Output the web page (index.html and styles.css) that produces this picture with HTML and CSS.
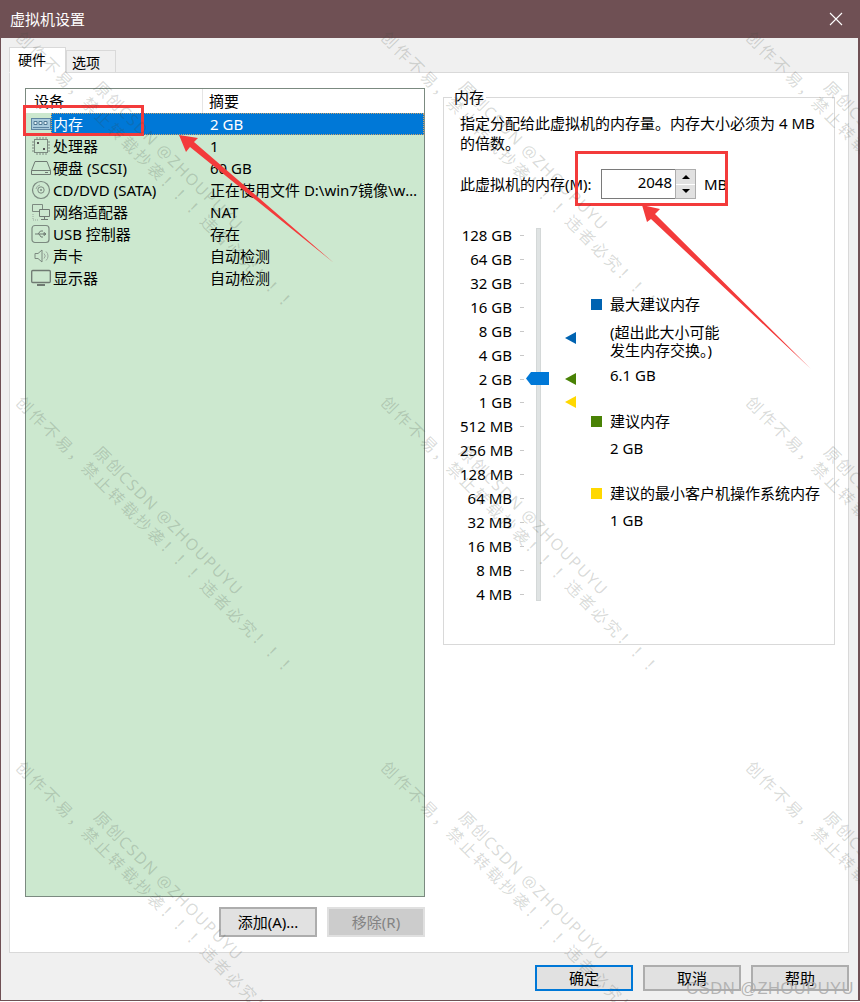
FILE: index.html
```html
<!DOCTYPE html>
<html lang="zh-CN">
<head>
    <meta charset="UTF-8">
    <title>虚拟机设置</title>
    <link rel="stylesheet" href="styles.css">
</head>
<body>
    <div class="window">
        <div class="titlebar">
            <span>虚拟机设置</span>
            <svg class="close" width="14" height="14" viewBox="0 0 14 14"><path d="M1 1L13 13M13 1L1 13" stroke="#fff" stroke-width="1.1" fill="none"/></svg>
        </div>

        <div class="content">
            <div class="tabs">
                <div class="tab active">硬件</div>
                <div class="tab">选项</div>
            </div>

            <div class="panel">
                <div class="left-column">
                    <div class="devices">
                        <div class="devices-head">
                            <div class="head-name">设备</div>
                            <div class="head-summary">摘要</div>
                        </div>

                        <div class="row selected">
                            <div class="row-icon">
                                <svg width="20" height="18" viewBox="0 0 20 18"><rect x="0.5" y="3.5" width="19" height="11" fill="#a9cbdc" stroke="#5f86a3"/><path d="M3 6.5h3v3H3zM8 6.5h3v3H8zM13 6.5h3v3h-3z" fill="#e8f3f8" stroke="#4f7893"/><path d="M2 12.5h16" stroke="#5f86a3"/></svg>
                            </div>
                            <div class="row-body">
                                <div class="row-name">内存</div>
                                <div class="row-summary">2 GB</div>
                            </div>
                        </div>
                        <div class="row">
                            <div class="row-icon">
                                <svg width="20" height="20" viewBox="0 0 20 20"><rect x="3.5" y="3.5" width="13" height="13" fill="none" stroke="#7c8a80"/><path d="M6 1v2M9 1v2M12 1v2M15 1v2M6 17v2M9 17v2M12 17v2M15 17v2M1 6h2M1 9h2M1 12h2M1 15h2M17 6h2M17 9h2M17 12h2M17 15h2" stroke="#7c8a80"/><path d="M6 6h2v2H6zM12 12h2v2h-2z" fill="#555"/></svg>
                            </div>
                            <div class="row-body">
                                <div class="row-name">处理器</div>
                                <div class="row-summary">1</div>
                            </div>
                        </div>
                        <div class="row">
                            <div class="row-icon">
                                <svg width="20" height="18" viewBox="0 0 20 18"><path d="M4 2.5h12l3.5 9v4H.5v-4zM.5 11.5h19" fill="none" stroke="#6f7a72"/><path d="M14 13.5h3" stroke="#6f7a72"/></svg>
                            </div>
                            <div class="row-body">
                                <div class="row-name">硬盘 (SCSI)</div>
                                <div class="row-summary">60 GB</div>
                            </div>
                        </div>
                        <div class="row">
                            <div class="row-icon">
                                <svg width="20" height="20" viewBox="0 0 20 20"><circle cx="10" cy="10" r="8.5" fill="none" stroke="#7c8a80" stroke-width="1.2"/><circle cx="10" cy="10" r="3.2" fill="none" stroke="#7c8a80"/><circle cx="10" cy="10" r="1" fill="#7c8a80"/><path d="M5 9a5 5 0 0 1 4-4" fill="none" stroke="#9aa89e"/></svg>
                            </div>
                            <div class="row-body">
                                <div class="row-name">CD/DVD (SATA)</div>
                                <div class="row-summary">正在使用文件 D:\win7镜像\win7_x64_professional.iso</div>
                            </div>
                        </div>
                        <div class="row">
                            <div class="row-icon">
                                <svg width="20" height="20" viewBox="0 0 20 20"><path d="M1.5 2.5h10v7h-10z" fill="none" stroke="#7c8a80"/><path d="M8.5 7.5h10v7h-10z" fill="#cce8cf" stroke="#6f7a72"/><path d="M13.5 14.5v3M10 17.5h7" stroke="#6f7a72"/><path d="M2 12v6h5" fill="none" stroke="#9aa89e" stroke-dasharray="1 1"/></svg>
                            </div>
                            <div class="row-body">
                                <div class="row-name">网络适配器</div>
                                <div class="row-summary">NAT</div>
                            </div>
                        </div>
                        <div class="row">
                            <div class="row-icon">
                                <svg width="20" height="20" viewBox="0 0 20 20"><rect x="1" y="1.5" width="17" height="17" rx="3" fill="none" stroke="#7c8a80" stroke-width="1.2"/><path d="M4 10h11M15 10l-2-1.5v3zM7 10l2.500-3h2.500M8 10l2 3h2" fill="none" stroke="#6f7a72"/></svg>
                            </div>
                            <div class="row-body">
                                <div class="row-name">USB 控制器</div>
                                <div class="row-summary">存在</div>
                            </div>
                        </div>
                        <div class="row">
                            <div class="row-icon">
                                <svg width="20" height="18" viewBox="0 0 20 18"><path d="M4 6.500h3l4-3.500v12l-4-3.500H4z" fill="none" stroke="#7c8a80"/><path d="M13 6.500a3.500 3.500 0 0 1 0 5M15 4.500a6 6 0 0 1 0 9" fill="none" stroke="#9aa89e"/></svg>
                            </div>
                            <div class="row-body">
                                <div class="row-name">声卡</div>
                                <div class="row-summary">自动检测</div>
                            </div>
                        </div>
                        <div class="row">
                            <div class="row-icon">
                                <svg width="20" height="18" viewBox="0 0 20 18"><rect x="0.700" y="1.500" width="18.600" height="12" rx="1" fill="none" stroke="#6f7a72" stroke-width="1.300"/><path d="M6 16h8" stroke="#6f7a72" stroke-width="2"/></svg>
                            </div>
                            <div class="row-body">
                                <div class="row-name">显示器</div>
                                <div class="row-summary">自动检测</div>
                            </div>
                        </div>
                    </div>

                    <div class="device-buttons">
                        <button class="btn">添加(A)...</button>
                        <button class="btn disabled">移除(R)</button>
                    </div>
                </div>

                <div class="groupbox">
                    <div class="legend-title">内存</div>
                    <p class="desc">指定分配给此虚拟机的内存量。内存大小必须为 4 MB<br>的倍数。</p>

                    <div class="memory-row">
                        <span class="memory-label">此虚拟机的内存(M):</span>
                        <div class="spinner">
                            <div class="spinner-value">2048</div>
                            <div class="spinner-buttons">
                                <div class="spin-btn"><i class="arrow-up"></i></div>
                                <div class="spin-btn"><i class="arrow-down"></i></div>
                            </div>
                        </div>
                        <span class="memory-unit">MB</span>
                    </div>

                    <div class="slider-area">
                        <div class="scale">
                            <div class="tick">128 GB</div>
                            <div class="tick">64 GB</div>
                            <div class="tick">32 GB</div>
                            <div class="tick">16 GB</div>
                            <div class="tick">8 GB</div>
                            <div class="tick">4 GB</div>
                            <div class="tick">2 GB</div>
                            <div class="tick">1 GB</div>
                            <div class="tick">512 MB</div>
                            <div class="tick">256 MB</div>
                            <div class="tick">128 MB</div>
                            <div class="tick">64 MB</div>
                            <div class="tick">32 MB</div>
                            <div class="tick">16 MB</div>
                            <div class="tick">8 MB</div>
                            <div class="tick">4 MB</div>
                        </div>
                        <div class="track">
                            <svg class="thumb" width="23" height="13" viewBox="0 0 23 13"><path d="M0 6.500L5 0h18v13H5z" fill="#0078d7"/></svg>
                        </div>
                        <div class="markers">
                            <i class="marker blue"></i>
                            <i class="marker green"></i>
                            <i class="marker yellow"></i>
                        </div>
                        <div class="legend">
                            <div class="legend-name"><i class="swatch blue"></i>最大建议内存</div>
                            <div class="legend-note">(超出此大小可能<br>发生内存交换。)</div>
                            <div class="legend-value first">6.1 GB</div>
                            <div class="legend-name second"><i class="swatch green"></i>建议内存</div>
                            <div class="legend-value">2 GB</div>
                            <div class="legend-name third"><i class="swatch yellow"></i>建议的最小客户机操作系统内存</div>
                            <div class="legend-value">1 GB</div>
                        </div>
                    </div>
                </div>
            </div>

            <div class="dialog-buttons">
                <button class="btn primary">确定</button>
                <button class="btn">取消</button>
                <button class="btn">帮助</button>
            </div>
        </div>
    </div>

    <!-- red marks someone drew on the screenshot -->
    <svg class="annotations" width="860" height="1002" viewBox="0 0 860 1002">
        <rect x="24.500" y="106.500" width="118" height="28" fill="none" stroke="#f33b3b" stroke-width="3"/>
        <rect x="576.500" y="152.500" width="150" height="52" fill="none" stroke="#f33b3b" stroke-width="3"/>
        <polygon points="179,135 198,138 194,142 334,263 190,147 186,152" fill="#f33b3b"/>
        <polygon points="642,205 660,209 655,214 811,369 651,219 647,222" fill="#f33b3b"/>
    </svg>

    <div class="watermark">
        <div class="wm-tile"><div class="wm-line">创作不易，禁止转载抄袭！！！违者必究！！！</div><div class="wm-line top">原创CSDN @ZHOUPUYU</div></div>
        <div class="wm-tile"><div class="wm-line">创作不易，禁止转载抄袭！！！违者必究！！！</div><div class="wm-line top">原创CSDN @ZHOUPUYU</div></div>
        <div class="wm-tile"><div class="wm-line">创作不易，禁止转载抄袭！！！违者必究！！！</div><div class="wm-line top">原创CSDN @ZHOUPUYU</div></div>
        <div class="wm-tile"><div class="wm-line">创作不易，禁止转载抄袭！！！违者必究！！！</div><div class="wm-line top">原创CSDN @ZHOUPUYU</div></div>
        <div class="wm-tile"><div class="wm-line">创作不易，禁止转载抄袭！！！违者必究！！！</div><div class="wm-line top">原创CSDN @ZHOUPUYU</div></div>
        <div class="wm-tile"><div class="wm-line">创作不易，禁止转载抄袭！！！违者必究！！！</div><div class="wm-line top">原创CSDN @ZHOUPUYU</div></div>
        <div class="wm-tile"><div class="wm-line">创作不易，禁止转载抄袭！！！违者必究！！！</div><div class="wm-line top">原创CSDN @ZHOUPUYU</div></div>
        <div class="wm-tile"><div class="wm-line">创作不易，禁止转载抄袭！！！违者必究！！！</div><div class="wm-line top">原创CSDN @ZHOUPUYU</div></div>
        <div class="wm-tile"><div class="wm-line">创作不易，禁止转载抄袭！！！违者必究！！！</div><div class="wm-line top">原创CSDN @ZHOUPUYU</div></div>
    </div>
    <div class="csdn-mark">CSDN @ZHOUPUYU</div>
</body>
</html>
```

FILE: styles.css
```css
* {
    box-sizing: border-box;
    margin: 0;
    padding: 0;
}

html, body {
    overflow: hidden;
}

body {
    position: relative;
    width: 860px;
    height: 1002px;
    background: #ffffff;
    color: #000000;
    font-family: "Noto Sans", "Noto Sans CJK SC", sans-serif;
    font-size: 15px;
    line-height: 19px;
}

.window {
    display: flex;
    flex-direction: column;
    width: 860px;
    height: 1001px;
    background: #f0f0f0;
    border: 1px solid #6f5054;
    border-top: 0;
    border-right-width: 2px;
}

.titlebar {
    display: flex;
    align-items: center;
    justify-content: space-between;
    height: 38px;
    flex-shrink: 0;
    padding: 0 15px 0 9px;
    background: #6f5054;
    color: #ffffff;
}

.content {
    display: flex;
    flex-direction: column;
    flex: 1;
    padding: 9px 9px 0 8px;
}

.tabs {
    display: flex;
    align-items: flex-end;
    height: 26px;
    margin-bottom: -1px;
    position: relative;
}

.tab {
    width: 50px;
    height: 23px;
    padding-left: 5px;
    border: 1px solid #d9d9d9;
    border-bottom: 0;
    font-size: 14px;
    line-height: 24px;
}

.tab.active {
    width: 57px;
    height: 26px;
    padding-left: 8px;
    background: #ffffff;
    border-bottom: 1px solid #ffffff;
}

.panel {
    display: flex;
    height: 881px;
    padding: 15px 12px 15px 15px;
    gap: 18px;
    background: #ffffff;
    border: 1px solid #d9d9d9;
}

.left-column {
    display: flex;
    flex-direction: column;
    width: 400px;
}

.devices {
    flex: 1;
    background: #cce8cf;
    border: 1px solid #7b8a80;
}

.devices-head {
    display: flex;
    height: 24px;
    background: #ffffff;
    line-height: 24px;
}

.head-name {
    width: 177px;
    padding-left: 8px;
    border-right: 1px solid #e5e5e5;
}

.head-summary {
    padding-left: 6px;
}

.row {
    display: flex;
    height: 22px;
    line-height: 22px;
}

.row-icon {
    display: flex;
    align-items: center;
    width: 25px;
    padding-left: 5px;
    flex-shrink: 0;
}

.row-body {
    display: flex;
    flex: 1;
    min-width: 0;
    padding-left: 2px;
}

.row-name {
    width: 157px;
    flex-shrink: 0;
}

.row-summary {
    flex: 1;
    min-width: 0;
    padding-right: 6px;
    overflow: hidden;
    white-space: nowrap;
    text-overflow: ellipsis;
}

.row.selected .row-body {
    background: #0078d7;
    color: #ffffff;
    outline: 1px dotted #cfa36a;
    outline-offset: -1px;
}

.device-buttons {
    display: flex;
    justify-content: flex-end;
    gap: 10px;
    padding-top: 10px;
}

.btn {
    width: 98px;
    height: 30px;
    background: #e1e1e1;
    border: 2px solid #adadad;
    color: #000000;
    font: inherit;
}

.btn.disabled {
    background: #cccccc;
    border-color: #e0e0e0;
    color: #838383;
}

.btn.primary {
    border-color: #0078d7;
}

.groupbox {
    position: relative;
    width: 392px;
    height: 548px;
    margin-top: 9px;
    padding: 15px 0 0 16px;
    border: 1px solid #d9d9d9;
}

.legend-title {
    position: absolute;
    top: -10px;
    left: 8px;
    padding: 0 2px;
    background: #ffffff;
}

.desc {
    line-height: 20px;
}

.memory-row {
    display: flex;
    align-items: center;
    margin-top: 16px;
    height: 30px;
}

.memory-label {
    width: 141px;
}

.spinner {
    display: flex;
    width: 95px;
    height: 30px;
    border: 1px solid #7a7a7a;
    border-right: 0;
}

.spinner-value {
    flex: 1;
    padding: 2px 3px 0 0;
    text-align: right;
    line-height: 20px;
    font-size: 15px;
}

.spinner-buttons {
    display: flex;
    flex-direction: column;
    width: 21px;
    margin: -1px 0;
    border: 1px solid #adadad;
    background: #ffffff;
    gap: 1px;
}

.spin-btn {
    display: flex;
    align-items: center;
    justify-content: center;
    flex: 1;
    background: #e1e1e1;
}

.arrow-up {
    border: 4px solid transparent;
    border-top: 0;
    border-bottom: 4px solid #000000;
}

.arrow-down {
    border: 4px solid transparent;
    border-bottom: 0;
    border-top: 4px solid #000000;
}

.memory-unit {
    margin-left: 8px;
}

.slider-area {
    display: flex;
    height: 373px;
    margin-top: 29px;
}

.scale {
    display: flex;
    flex-direction: column;
    justify-content: space-between;
    width: 64px;
}

.tick {
    position: relative;
    height: 14px;
    padding-right: 12px;
    margin-right: 0;
    text-align: right;
    line-height: 14px;
    white-space: nowrap;
}

.tick::after {
    content: "";
    position: absolute;
    right: 0;
    top: 7px;
    width: 4px;
    height: 1px;
    background: #c8c8c8;
}

.track {
    position: relative;
    width: 5px;
    margin-left: 12px;
    background: #dfe3e3;
    border: 1px solid #d4d8d8;
}

.thumb {
    position: absolute;
    left: -11px;
    top: 143px;
}

.markers {
    position: relative;
    width: 50px;
}

.marker {
    position: absolute;
    left: 24px;
    width: 0;
    height: 0;
    border-top: 6px solid transparent;
    border-bottom: 6px solid transparent;
    border-right: 11px solid #000000;
}

.marker.blue {
    top: 104px;
    border-right-color: #0063b1;
}

.marker.green {
    top: 145px;
    border-right-color: #498205;
}

.marker.yellow {
    top: 168px;
    border-right-color: #ffd800;
}

.legend {
    position: relative;
    padding: 67px 0 0 19px;
    margin-left: 0;
    white-space: nowrap;
}

.legend-name {
    position: relative;
}

.swatch {
    position: absolute;
    left: -19px;
    top: 4px;
    width: 11px;
    height: 11px;
}

.swatch.blue { background: #0063b1; }
.swatch.green { background: #498205; }
.swatch.yellow { background: #ffd800; }

.legend-note {
    margin-top: 9px;
    line-height: 18px;
}

.legend-value {
    margin-top: 8px;
}

.legend-value.first {
    margin-top: 7px;
}

.legend-name.second {
    margin-top: 27px;
}

.legend-name.third {
    margin-top: 26px;
}

.dialog-buttons {
    display: flex;
    justify-content: flex-end;
    gap: 10px;
    padding-top: 12px;
}

.dialog-buttons .btn {
    height: 26px;
    line-height: 20px;
    padding: 0;
}

.annotations {
    position: absolute;
    top: 0;
    left: 0;
    pointer-events: none;
}

.watermark {
    position: absolute;
    top: 0;
    left: 0;
    width: 860px;
    height: 1002px;
    overflow: hidden;
    display: grid;
    grid-template-columns: repeat(3, 365px);
    grid-auto-rows: 365px;
    padding: 30px 0 0 15px;
    pointer-events: none;
}

.wm-tile {
    position: relative;
}

.wm-line {
    position: absolute;
    top: -6px;
    left: 4px;
    transform: rotate(45deg);
    transform-origin: 0 50%;
    color: rgba(60, 70, 60, 0.2);
    font-size: 16px;
    line-height: 20px;
    letter-spacing: 2.6px;
    white-space: nowrap;
}

.wm-line.top {
    top: 44px;
    left: 82px;
    letter-spacing: 1.4px;
}

.csdn-mark {
    position: absolute;
    right: 6px;
    bottom: 4px;
    color: rgba(170, 170, 170, 0.85);
    font-family: "Liberation Sans", sans-serif;
    font-size: 16.5px;
    letter-spacing: 0.5px;
    line-height: 20px;
}
```
